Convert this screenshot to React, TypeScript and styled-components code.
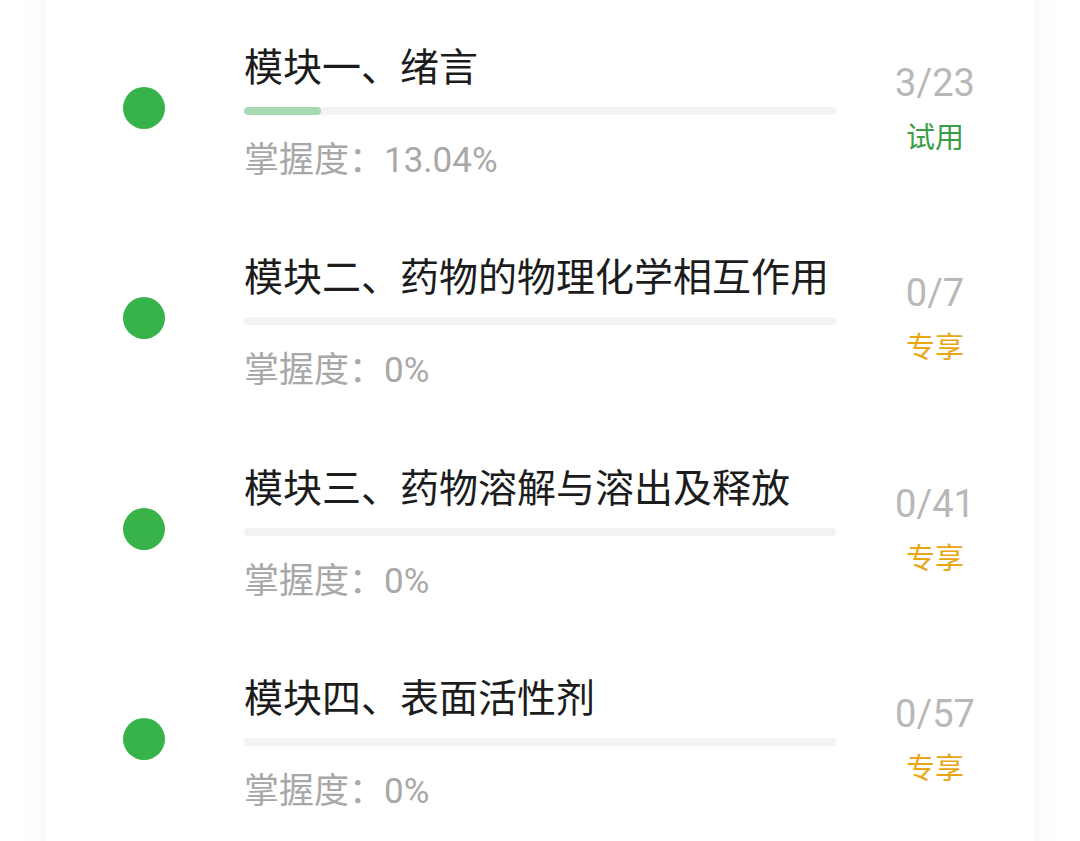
import * as React from 'react'
import styled, { createGlobalStyle } from 'styled-components'

const GlobalStyle = createGlobalStyle`
  html, body {
    margin: 0;
    padding: 0;
    background: #ffffff;
    font-family: Roboto, "Noto Sans CJK SC", sans-serif;
    overflow: hidden;
  }
`

const Page = styled.div`
  width: 1080px;
  height: 841px;
  overflow: hidden;
  background: #fff;
`

const Card = styled.div`
  margin: -20px 46px 0;
  padding-top: 23px;
  width: 988px;
  height: 900px;
  background: #fff;
  box-shadow: 0 0 28px rgba(0, 0, 0, 0.045);
`

const Row = styled.div`
  display: flex;
  align-items: flex-start;
  height: 210.3px;
`

const Dot = styled.div`
  flex: none;
  width: 42px;
  height: 42px;
  margin: 84px 0 0 77px;
  border-radius: 50%;
  background: #37b34a;
`

const Content = styled.div`
  flex: none;
  width: 592px;
  margin-left: 79px;
  padding-top: 37px;
`

const Title = styled.div`
  font-family: "Noto Sans CJK SC", sans-serif;
  font-size: 39px;
  line-height: 48px;
  color: #1c1c1c;
  white-space: nowrap;
`

const Track = styled.div`
  margin-top: 19px;
  height: 8px;
  border-radius: 4px;
  background: #f3f3f3;
  overflow: hidden;
`

const Fill = styled.div`
  height: 100%;
  border-radius: 4px;
  background: #a6d9b1;
`

const Mastery = styled.div`
  margin-top: 24px;
  font-family: Roboto, "Noto Sans CJK SC", sans-serif;
  font-size: 35px;
  line-height: 44px;
  color: #a8a8a8;
  white-space: nowrap;
`

const Side = styled.div`
  flex: none;
  width: 120px;
  margin-left: 39px;
  padding-top: 57px;
  text-align: center;
`

const Count = styled.div`
  font-family: Roboto, sans-serif;
  font-size: 38px;
  line-height: 46px;
  color: #b8b8b8;
`

const Tag = styled.div<{ $kind: 'trial' | 'vip' }>`
  margin-top: 11px;
  font-family: "Noto Sans CJK SC", sans-serif;
  font-size: 29px;
  line-height: 36px;
  color: ${p => (p.$kind === 'trial' ? '#3a9d48' : '#e8a712')};
`

interface Module {
  title: string
  done: number
  total: number
  tag: 'trial' | 'vip'
}

const modules: Module[] = [
  { title: '模块一、绪言', done: 3, total: 23, tag: 'trial' },
  { title: '模块二、药物的物理化学相互作用', done: 0, total: 7, tag: 'vip' },
  { title: '模块三、药物溶解与溶出及释放', done: 0, total: 41, tag: 'vip' },
  { title: '模块四、表面活性剂', done: 0, total: 57, tag: 'vip' },
]

const pct = (m: Module) => {
  const v = (m.done / m.total) * 100
  return v === 0 ? '0%' : v.toFixed(2) + '%'
}

export default function App() {
  return (
    <Page>
      <GlobalStyle />
      <Card>
        {modules.map(m => (
          <Row key={m.title}>
            <Dot />
            <Content>
              <Title>{m.title}</Title>
              <Track>
                {m.done > 0 && <Fill style={{ width: `${(m.done / m.total) * 100}%` }} />}
              </Track>
              <Mastery>掌握度：{pct(m)}</Mastery>
            </Content>
            <Side>
              <Count>
                {m.done}/{m.total}
              </Count>
              <Tag $kind={m.tag}>{m.tag === 'trial' ? '试用' : '专享'}</Tag>
            </Side>
          </Row>
        ))}
      </Card>
    </Page>
  )
}
